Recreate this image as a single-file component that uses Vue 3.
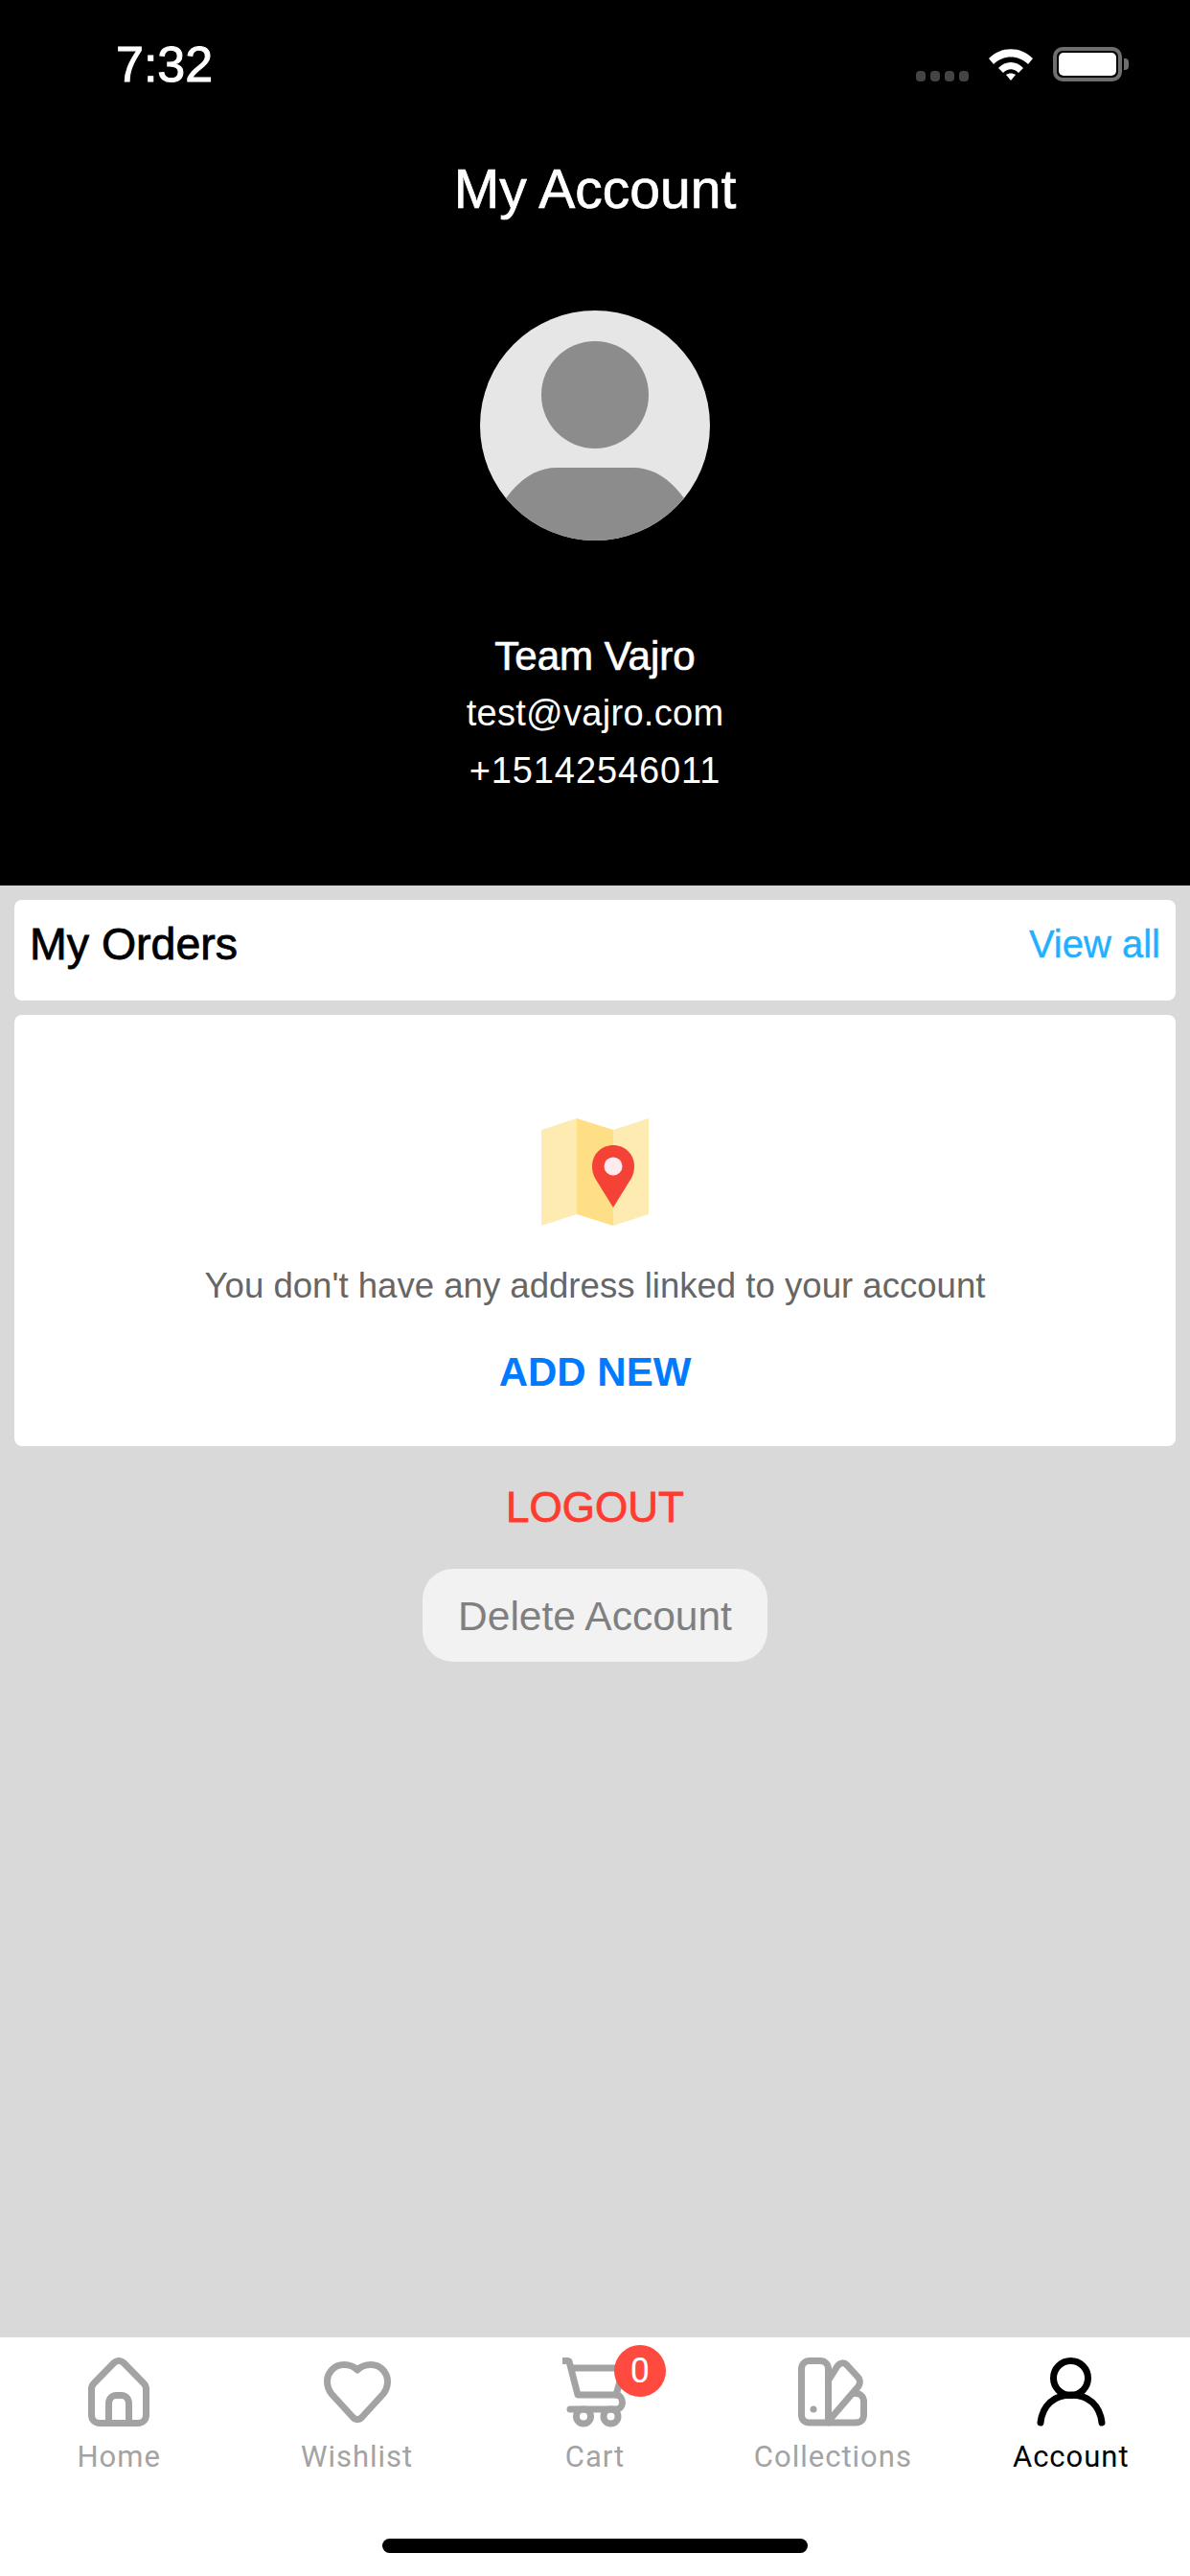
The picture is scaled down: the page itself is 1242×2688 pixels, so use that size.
<template>
  <div class="screen">
    <header class="hero">
      <div class="status-bar">
        <span class="clock">7:32</span>
        <div class="status-icons">
          <div class="signal">
            <span v-for="n in 4" :key="n" class="signal-dot"></span>
          </div>
          <svg class="wifi" viewBox="0 0 48 36" width="48" height="36">
            <path d="M1 12C14 -1 34 -1 47 12L42 18C32 8 16 8 6 18Z" fill="#fff" />
            <path d="M11 22C18 14 30 14 37 22L32 27C27 22 21 22 16 27Z" fill="#fff" />
            <path d="M19 29C22 27 26 27 29 29L24 35Z" fill="#fff" />
          </svg>
          <div class="battery">
            <div class="battery-fill"></div>
          </div>
          <span class="battery-cap"></span>
        </div>
      </div>
      <h1 class="title">My Account</h1>
      <svg class="avatar" viewBox="0 0 240 240" width="240" height="240">
        <defs>
          <clipPath id="avatar-clip"><circle cx="120" cy="120" r="120" /></clipPath>
        </defs>
        <circle cx="120" cy="120" r="120" fill="#e6e6e6" />
        <g clip-path="url(#avatar-clip)">
          <circle cx="120" cy="88" r="56" fill="#8c8c8c" />
          <path d="M27 196C42 175 60 164 80 164H160C180 164 198 175 213 196L240 240H0Z" fill="#8c8c8c" />
        </g>
      </svg>
      <p class="name">Team Vajro</p>
      <p class="contact email">test@vajro.com</p>
      <p class="contact phone">+15142546011</p>
    </header>

    <main class="content">
      <section class="card orders">
        <span class="orders-title">My Orders</span>
        <span class="view-all">View all</span>
      </section>

      <section class="card address">
        <svg class="map" viewBox="0 0 112 112" width="112" height="112">
          <path d="M0 12L37 0V100L0 112Z" fill="#feebb1" />
          <path d="M37 0L75 12V112L37 100Z" fill="#ffdf85" />
          <path d="M75 12L112 0V100L75 112Z" fill="#feebb1" />
          <path d="M75 93L57 64C54 59 53 55 53 50C53 37 63 28 75 28C87 28 97 37 97 50C97 55 96 59 93 64Z" fill="#f44336" />
          <circle cx="75" cy="50" r="9.500" fill="#ffebee" />
        </svg>
        <p class="empty-text">You don't have any address linked to your account</p>
        <span class="add-new">ADD NEW</span>
      </section>

      <span class="logout">LOGOUT</span>
      <button class="delete-btn">Delete Account</button>
    </main>

    <nav class="tabbar">
      <div class="tabs">
        <div v-for="tab in tabs" :key="tab.label" class="tab" :class="{ active: tab.active }">
          <div class="tab-icon">
            <svg v-if="tab.label === 'Home'" viewBox="0 0 72 72" width="72" height="72" class="stroke-icon">
              <path d="M36 3.500C34 3.500 32 4.500 30.500 6L10 27C8 29 7.500 31 7.500 33V60C7.500 65 11 68.500 16 68.500H56C61 68.500 64.500 65 64.500 60V33C64.500 31 64 29 62 27L41.500 6C40 4.500 38 3.500 36 3.500Z" />
              <path d="M25.500 68V48C25.500 43 29 39.500 33 39.500H39C43 39.500 46.500 43 46.500 48V68" />
            </svg>
            <svg v-else-if="tab.label === 'Wishlist'" viewBox="0 0 72 72" width="72" height="72" class="stroke-icon">
              <path d="M36 13C32 9 27 7.500 22 7.500C12 7.500 4.500 15.500 4.500 25C4.500 30 6 34 9 38L31 62C34 65.500 38 65.500 41 62L63 38C66 34 67.500 30 67.500 25C67.500 15.500 60 7.500 50 7.500C45 7.500 40 9 36 13Z" />
            </svg>
            <svg v-else-if="tab.label === 'Cart'" viewBox="0 0 72 72" width="72" height="72" class="stroke-icon">
              <path d="M2 3.500H9" class="flat" />
              <path d="M9 4L18 39H58" />
              <path d="M12 11H66L58 39" />
              <path d="M58 39C62 39 64.500 43 64.500 47C64.500 51 62 54 58 54H10" />
              <circle cx="24" cy="61.500" r="7.500" />
              <circle cx="52.500" cy="61.500" r="7.500" />
            </svg>
            <svg v-else-if="tab.label === 'Collections'" viewBox="0 0 72 72" width="72" height="72" class="stroke-icon">
              <path d="M31.500 68H12C7 68 3.500 65 3.500 60V12C3.500 7 7 3.500 12 3.500H23C28 3.500 31.500 7 31.500 12Z" />
              <path d="M31.500 24L41 9C44 5 48 5 51 8L62 20C65 23 65 27 63 30L32 66" />
              <path d="M58 37.500H60C65 37.500 68.500 41 68.500 46V60C68.500 65 65 68 60 68H32" />
              <circle cx="16" cy="54" r="3.500" class="dot" />
            </svg>
            <svg v-else viewBox="0 0 72 72" width="72" height="72" class="stroke-icon">
              <ellipse cx="35.500" cy="21.500" rx="18" ry="18" />
              <path d="M4 68C6 50 18 39 36 39C54 39 66 50 68 68" />
            </svg>
            <span v-if="tab.label === 'Cart'" class="badge">0</span>
          </div>
          <span class="tab-label">{{ tab.label }}</span>
        </div>
      </div>
      <div class="home-indicator"></div>
    </nav>
  </div>
</template>

<script setup>
const tabs = [
  { label: 'Home' },
  { label: 'Wishlist' },
  { label: 'Cart' },
  { label: 'Collections' },
  { label: 'Account', active: true }
];
</script>

<style>
html,
body {
  margin: 0;
  background: #d9d9d9;
}
</style>

<style scoped>
.screen {
  width: 1242px;
  height: 2688px;
  display: flex;
  flex-direction: column;
  background: #d9d9d9;
  font-family: "Liberation Sans", Arial, sans-serif;
  overflow: hidden;
}

.hero {
  height: 924px;
  flex-shrink: 0;
  background: #000;
  color: #fff;
  display: flex;
  flex-direction: column;
  align-items: center;
}

.status-bar {
  width: 100%;
  height: 134px;
  box-sizing: border-box;
  padding: 0 64px 0 121px;
  display: flex;
  justify-content: space-between;
  align-items: center;
}

.clock {
  font-size: 52px;
  font-weight: 400;
  -webkit-text-stroke: 1px #fff;
}

.status-icons {
  display: flex;
  align-items: center;
}

.signal {
  display: flex;
  gap: 5px;
  align-self: flex-end;
  margin-right: 20px;
}

.signal-dot {
  width: 10px;
  height: 11px;
  border-radius: 4px;
  background: #444;
}

.wifi {
  margin-right: 20px;
}

.battery {
  width: 72px;
  height: 36px;
  box-sizing: border-box;
  border: 4px solid #6f6f6f;
  border-radius: 10px;
  padding: 2px;
}

.battery-fill {
  width: 100%;
  height: 100%;
  background: #fff;
  border-radius: 5px;
}

.battery-cap {
  width: 5px;
  height: 12px;
  margin-left: 2px;
  background: #6f6f6f;
  border-radius: 0 4px 4px 0;
}

.title {
  margin: 32px 0 0;
  font-size: 57px;
  line-height: 62px;
  font-weight: 400;
  -webkit-text-stroke: 0.7px #fff;
}

.avatar {
  margin-top: 96px;
}

.name {
  margin: 96px 0 0;
  font-size: 42px;
  line-height: 50px;
  font-weight: 400;
  -webkit-text-stroke: 0.7px #fff;
}

.contact {
  margin: 0;
  font-size: 38px;
  line-height: 44px;
}

.email {
  margin-top: 12px;
  letter-spacing: 0.3px;
}

.phone {
  margin-top: 16px;
  letter-spacing: 0.9px;
}

.content {
  flex: 1;
  box-sizing: border-box;
  padding: 15px 15px 0;
  display: flex;
  flex-direction: column;
  align-items: center;
}

.card {
  width: 100%;
  background: #fff;
  border-radius: 8px;
}

.orders {
  height: 105px;
  box-sizing: border-box;
  padding: 21px 16px 0;
  display: flex;
  justify-content: space-between;
  align-items: flex-start;
}

.orders-title {
  font-size: 46.500px;
  line-height: 50px;
  color: #000;
  -webkit-text-stroke: 0.8px #000;
}

.view-all {
  font-size: 40px;
  line-height: 50px;
  color: #1fb0ff;
  -webkit-text-stroke: 0.4px #1fb0ff;
}

.address {
  margin-top: 15px;
  height: 450px;
  display: flex;
  flex-direction: column;
  align-items: center;
  box-sizing: border-box;
  padding-top: 108px;
}

.map {
  flex-shrink: 0;
}

.empty-text {
  margin: 42px 0 0;
  font-size: 36.600px;
  line-height: 42px;
  color: #666;
}

.add-new {
  margin-top: 46px;
  font-size: 42px;
  line-height: 46px;
  font-weight: 700;
  color: #007aff;
}

.logout {
  margin-top: 38px;
  font-size: 44px;
  line-height: 52px;
  color: #ff3b30;
  -webkit-text-stroke: 0.8px #ff3b30;
}

.delete-btn {
  margin-top: 38px;
  width: 360px;
  height: 97px;
  padding: 2px 0 0;
  border: 0;
  border-radius: 32px;
  background: #f2f2f2;
  color: #808080;
  font-family: inherit;
  font-size: 42.500px;
}

.tabbar {
  height: 249px;
  flex-shrink: 0;
  background: #fff;
  display: flex;
  flex-direction: column;
  align-items: center;
}

.tabs {
  width: 100%;
  display: grid;
  grid-template-columns: repeat(5, 1fr);
  padding-top: 21px;
}

.tab {
  display: flex;
  flex-direction: column;
  align-items: center;
  color: #a3a3a3;
}

.tab.active {
  color: #000;
}

.tab-icon {
  position: relative;
  width: 72px;
  height: 72px;
}

.stroke-icon {
  overflow: visible;
  fill: none;
  stroke: currentColor;
  stroke-width: 7;
  stroke-linecap: round;
  stroke-linejoin: round;
}

.stroke-icon .flat {
  stroke-linecap: butt;
}

.stroke-icon .dot {
  fill: currentColor;
  stroke: none;
}

.badge {
  position: absolute;
  top: -13px;
  left: 56px;
  width: 54px;
  height: 54px;
  border-radius: 50%;
  background: #ff4a3f;
  color: #fff;
  font-family: Roboto, sans-serif;
  font-size: 36px;
  line-height: 54px;
  text-align: center;
}

.tab-label {
  margin-top: 14px;
  font-family: Roboto, sans-serif;
  font-size: 31px;
  line-height: 36px;
  letter-spacing: 1px;
}

.home-indicator {
  width: 444px;
  height: 15px;
  margin-top: 67px;
  border-radius: 8px;
  background: #000;
}
</style>
